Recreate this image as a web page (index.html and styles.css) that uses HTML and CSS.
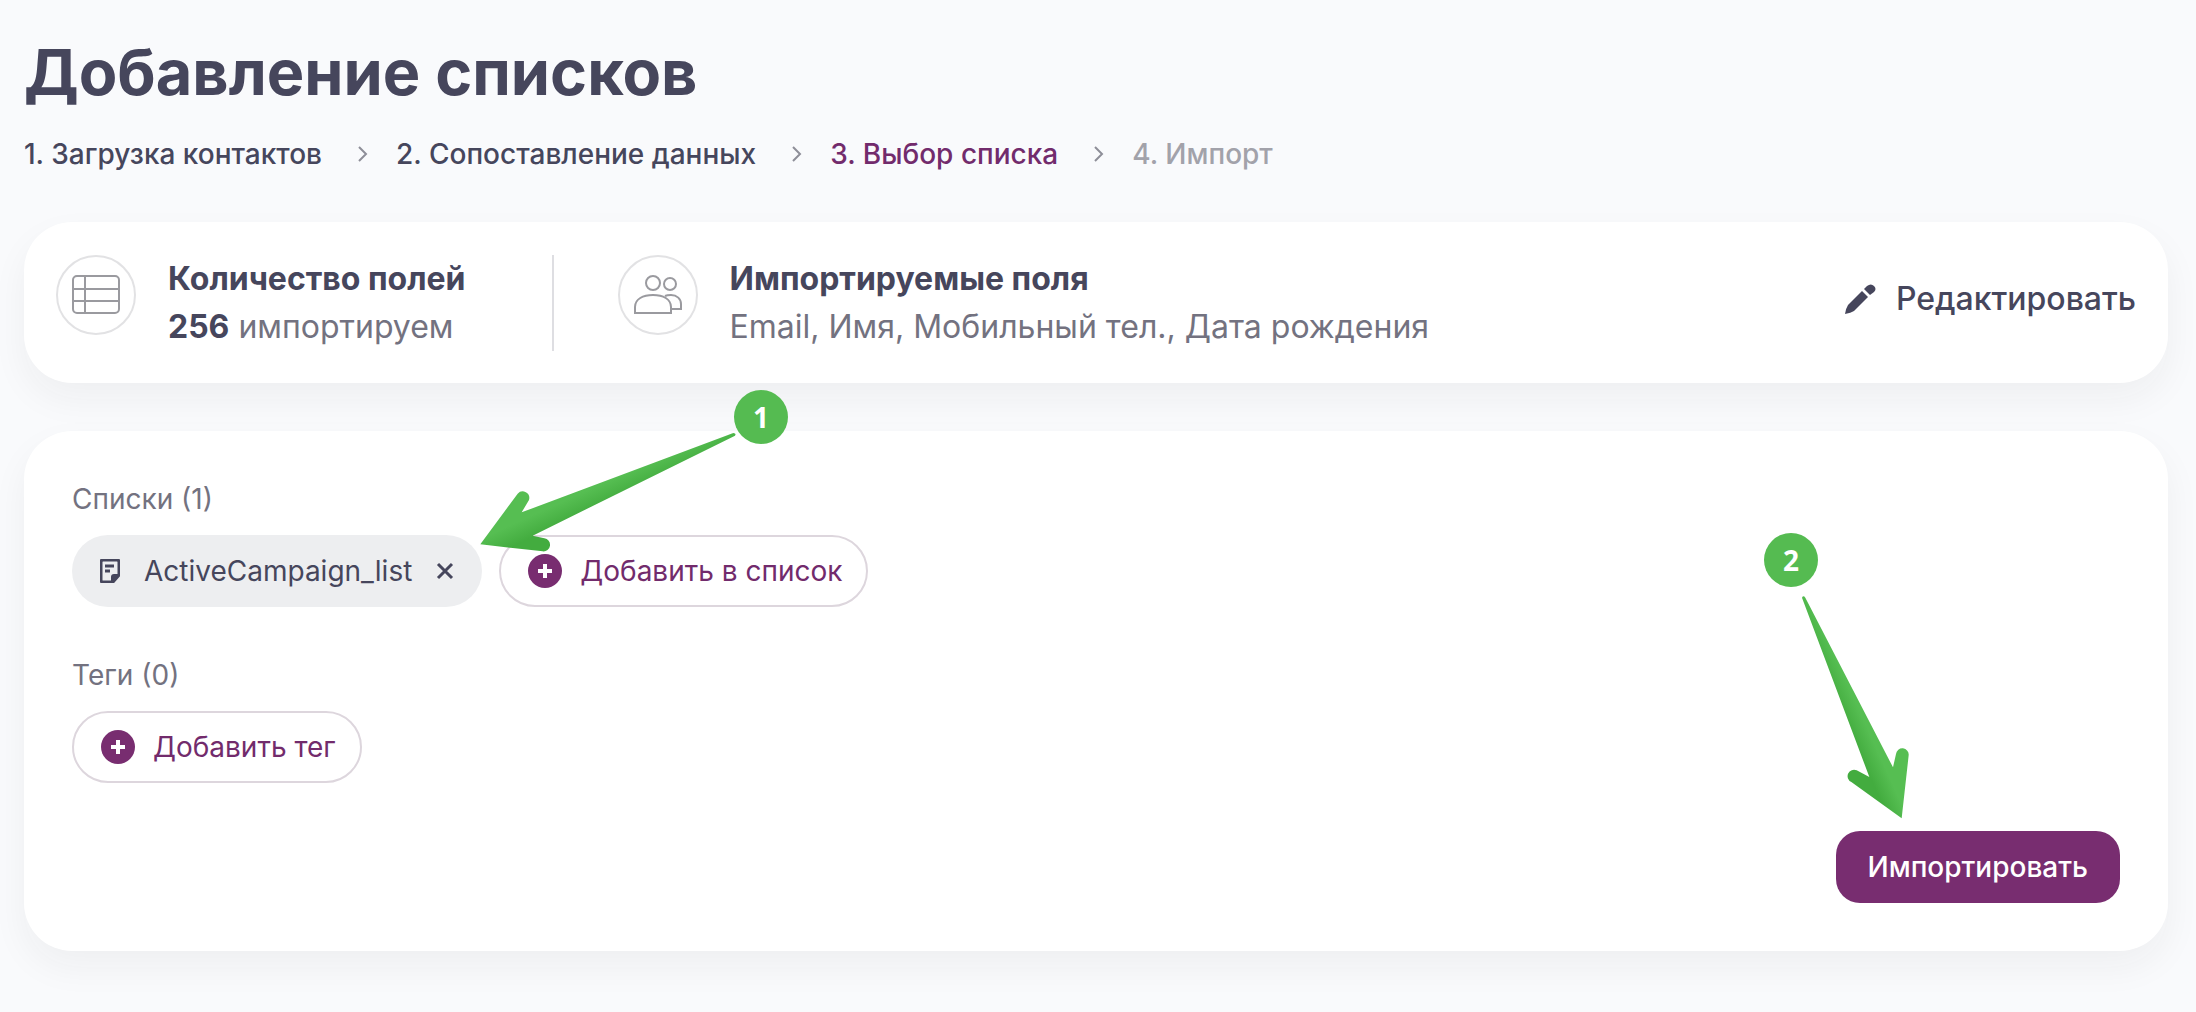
FILE: index.html
```html
<!DOCTYPE html>
<html lang="ru">
<head>
	<meta charset="UTF-8">
	<title>Добавление списков</title>
	<link rel="stylesheet" href="styles.css">
</head>
<body>
	<h1>Добавление списков</h1>

	<!-- шаги импорта -->
	<nav class="steps">
		<a href="#">1. Загрузка контактов</a>
		<svg class="chevron" viewBox="0 0 10 16"><path d="M1 1l7 7-7 7"/></svg>
		<a href="#">2. Сопоставление данных</a>
		<svg class="chevron" viewBox="0 0 10 16"><path d="M1 1l7 7-7 7"/></svg>
		<a href="#" class="active">3. Выбор списка</a>
		<svg class="chevron" viewBox="0 0 10 16"><path d="M1 1l7 7-7 7"/></svg>
		<span class="disabled">4. Импорт</span>
	</nav>

	<!-- сводка -->
	<section class="card summary">
		<div class="info">
			<div class="circle">
				<svg width="48" height="40" viewBox="0 0 48 40">
					<rect x="1" y="1" width="46" height="37" rx="4"/>
					<path d="M13 1v37M1 14h46M1 26h46"/>
				</svg>
			</div>
			<div class="text">
				<h2>Количество полей</h2>
				<p><b>256</b> импортируем</p>
			</div>
		</div>
		<div class="info">
			<div class="circle">
				<svg width="48" height="40" viewBox="0 0 48 40">
					<circle cx="19" cy="8" r="7"/>
					<circle cx="36" cy="9" r="6"/>
					<path d="M1 38V32C1 24 9 20 19 20s18 4 18 12v6z"/>
					<path d="M31 21c2-1 4-1 6-1 6 0 10 4 10 9v5H37"/>
				</svg>
			</div>
			<div class="text">
				<h2>Импортируемые поля</h2>
				<p>Email, Имя, Мобильный тел., Дата рождения</p>
			</div>
		</div>
		<button type="button" class="edit">
			<svg width="32" height="32" viewBox="0 0 32 32">
				<path d="M18 8l6 6L10 28Q7 30 1 31 2 25 4 22z"/>
				<path d="M20 6l3-3q4-3 7 0 3 3 0 6l-4 3z"/>
			</svg>
			Редактировать
		</button>
	</section>

	<!-- списки и теги -->
	<section class="card choice">
		<h3>Списки (1)</h3>
		<div class="row">
			<div class="chip">
				<svg width="20" height="24" viewBox="0 0 20 24">
					<path class="line" d="M3 1h14q2 0 2 2v13l-6 7H3q-2 0-2-2V3q0-2 2-2zM5 7h9M5 12h5"/>
					<path d="M11 23v-5q0-3 3-3h5v2l-6 6z"/>
				</svg>
				<span>ActiveCampaign_list</span>
				<button type="button" class="remove" aria-label="Удалить">
					<svg width="18" height="18" viewBox="0 0 18 18"><path class="line" d="M2 2l14 14M16 2L2 16"/></svg>
				</button>
			</div>
			<button type="button" class="add">
				<svg width="34" height="34" viewBox="0 0 34 34"><circle cx="17" cy="17" r="17"/><path d="M17 10v14M10 17h14"/></svg>
				Добавить в список
			</button>
		</div>
		<h3>Теги (0)</h3>
		<div class="row">
			<button type="button" class="add">
				<svg width="34" height="34" viewBox="0 0 34 34"><circle cx="17" cy="17" r="17"/><path d="M17 10v14M10 17h14"/></svg>
				Добавить тег
			</button>
		</div>
		<div class="footer">
			<button type="button" class="import">Импортировать</button>
		</div>

		<!-- подсказки поверх карточки -->
		<svg class="arrow arrow-one" viewBox="114 144 780 375">
			<defs>
				<linearGradient id="green-one" gradientUnits="userSpaceOnUse" x1="350" y1="330" x2="400" y2="440">
					<stop offset="0.3" stop-color="#56be52"/>
					<stop offset="0.8" stop-color="#43ac3f"/>
				</linearGradient>
			</defs>
			<path fill="url(#green-one)" d="M121 490L233 338A20 20 0 0 1 267 357L245 394 880 156Q890 157 885 164L278 464 313 472A19 19 0 0 1 308 511z"/>
		</svg>
		<span class="badge badge-one">1</span>
		<svg class="arrow arrow-two" viewBox="240 279 330 675">
			<defs>
				<linearGradient id="green-two" gradientUnits="userSpaceOnUse" x1="470" y1="700" x2="390" y2="736">
					<stop offset="0.2" stop-color="#56be52"/>
					<stop offset="0.8" stop-color="#43ac3f"/>
				</linearGradient>
			</defs>
			<path fill="url(#green-two)" d="M545 952L394 843A19 19 0 0 1 410 808L448 828 246 290Q250 282 256 290L519 799 528 759A19 19 0 0 1 566 763z"/>
		</svg>
		<span class="badge badge-two">2</span>
	</section>
</body>
</html>
```
FILE: styles.css
```css
body {
	margin: 0;
	padding: 32px 28px 62px 24px;
	background-color: #F9FAFC;
	color: #46465C;
	font-family: Inter, "Liberation Sans", sans-serif;
	font-size: 28px;
	line-height: 40px;
}

h1, h2, h3, p {
	margin: 0;
}

h1 {
	font-size: 63px;
	line-height: 80px;
	font-weight: 700;
}

button {
	padding: 0;
	border: none;
	background: none;
	color: inherit;
	font: inherit;
	cursor: pointer;
}

.steps {
	display: flex;
	align-items: center;
	margin-top: 22px;
	margin-bottom: 48px;
	font-weight: 500;
}

.steps a {
	color: inherit;
	text-decoration: none;
}

.steps .active {
	color: #722B6C;
}

.steps .disabled {
	color: #A2A2AA;
}

.chevron {
	width: 10px;
	height: 16px;
	margin: 0 28px 0 36px;
	fill: none;
	stroke: #8E8E98;
	stroke-width: 2;
}

.card {
	border-radius: 48px;
	background-color: #FFF;
	box-shadow: 0 16px 36px rgba(40, 40, 40, 0.05);
}

.summary {
	display: flex;
	align-items: flex-start;
	padding: 33px 32px 32px;
	font-size: 32px;
	line-height: 48px;
}

.info {
	display: flex;
	gap: 32px;
}

.info + .info {
	margin-left: 86px;
	padding-left: 64px;
	border-left: 2px solid #DEDEE2;
}

.info h2 {
	font-size: 32px;
	font-weight: 700;
}

.info p {
	color: #737280;
}

.info b {
	color: #46465C;
	font-weight: 700;
}

.circle {
	display: flex;
	align-items: center;
	justify-content: center;
	width: 80px;
	height: 80px;
	box-sizing: border-box;
	border: 2px solid #E2E2E4;
	border-radius: 50%;
}

.circle svg {
	fill: none;
	stroke: #9A9A9F;
	stroke-width: 2;
}

.edit {
	display: flex;
	align-items: center;
	gap: 20px;
	margin-left: auto;
	margin-top: 20px;
	font-weight: 500;
}

.edit svg {
	fill: #46465C;
}

.choice {
	position: relative;
	margin-top: 48px;
	padding: 48px;
}

.choice h3 {
	margin-bottom: 16px;
	color: #737280;
	font-size: 28px;
	font-weight: 400;
}

.row {
	display: flex;
	gap: 17px;
	margin-bottom: 48px;
}

.chip,
.add {
	display: flex;
	align-items: center;
	height: 72px;
	box-sizing: border-box;
	border-radius: 36px;
}

.chip {
	gap: 24px;
	padding: 0 28px;
	background-color: #EDEEF0;
}

.chip svg {
	display: block;
	fill: #46465C;
}

.chip .line {
	fill: none;
	stroke: #46465C;
	stroke-width: 3;
}

.add {
	gap: 18px;
	padding: 0 24px 0 27px;
	border: 2px solid #DDD6DD;
	color: #722B6C;
}

.add circle {
	fill: #782D70;
}

.add path {
	stroke: #FFF;
	stroke-width: 4;
}

.footer {
	display: flex;
	justify-content: flex-end;
}

.import {
	height: 72px;
	padding: 0 32px;
	border-radius: 24px;
	background-color: #782D70;
	color: #FFF;
	font-weight: 500;
}

/* стрелки и номера */
.arrow,
.badge {
	position: absolute;
}

.badge {
	width: 54px;
	height: 54px;
	border-radius: 50%;
	background-color: #55BB51;
	color: #FFF;
	font: bold 28px/54px "Open Sans", sans-serif;
	text-align: center;
}

.arrow-one {
	left: 454px;
	top: -2px;
	width: 260px;
	height: 125px;
}

.badge-one {
	left: 710px;
	top: -41px;
}

.arrow-two {
	right: 258px;
	top: 163px;
	width: 110px;
	height: 225px;
}

.badge-two {
	right: 350px;
	top: 102px;
}
```
